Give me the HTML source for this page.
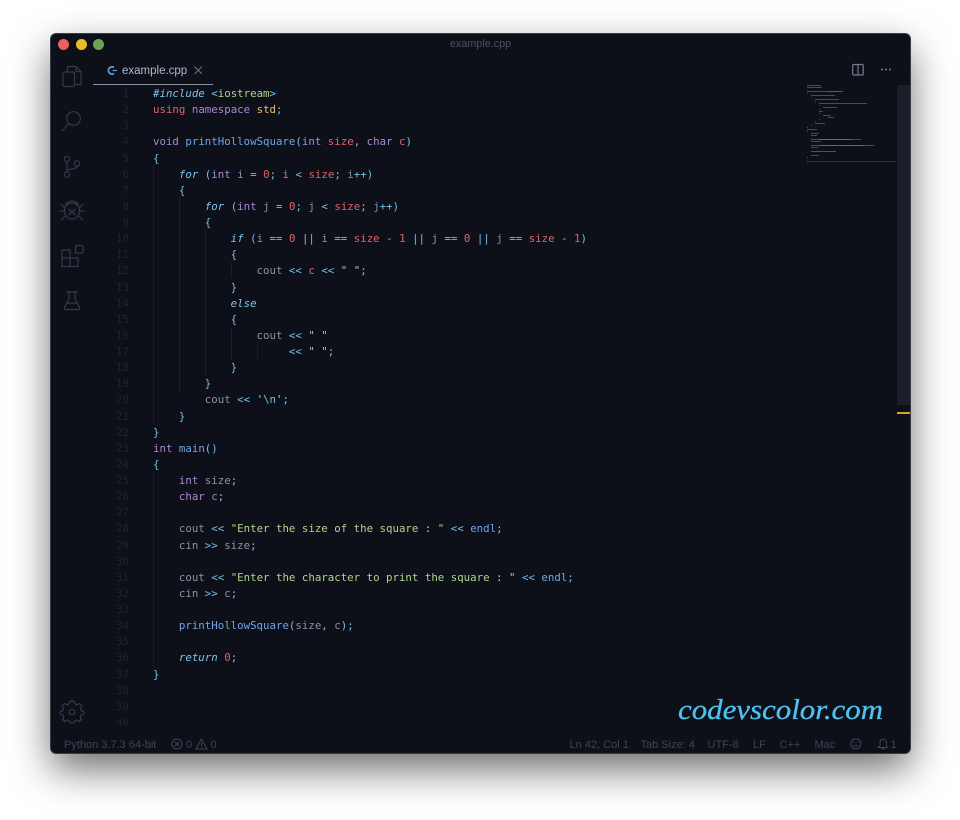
<!DOCTYPE html>
<html><head><meta charset="utf-8"><style>
html,body{margin:0;padding:0;background:#fff;width:960px;height:820px;overflow:hidden}
#win{position:absolute;left:51px;top:34px;width:859px;height:719px;background:#0d1019;border-radius:5px;box-shadow:0 0 0 1px #3a3d46,0 16px 40px rgba(0,0,0,.58)}
.d{position:absolute;top:38.500px;width:11px;height:11px;border-radius:50%}
.abs{position:absolute}
#code{position:absolute;left:153px;top:86px;font:10.75px/16.13px "DejaVu Sans Mono",monospace;color:#8c92a4;filter:blur(.25px)}
#code div{height:16.13px;white-space:pre}
#nums{position:absolute;left:100px;width:29px;top:86px;text-align:right;font:10.75px/16.13px "DejaVu Sans Mono",monospace;color:#1f2331}
#nums div{height:16.13px}
.k{color:#ab86d6}.r{color:#e0636b}.f{color:#6fa5ea}.c{color:#74bfe6}.g{color:#b0d68a}.i{color:#80c4ee;font-style:italic}.y{color:#e8c170}
.g1{position:absolute;width:1px;background:#1b1f2a}
.s{position:absolute;top:737.5px;font:11px/14px "Liberation Sans",sans-serif;color:#3e4454;white-space:pre}
</style></head><body>
<div id="win"></div>
<div class="d" style="left:58px;background:#ec5f5f"></div>
<div class="d" style="left:75.5px;background:#e8bd30"></div>
<div class="d" style="left:93px;background:#6fa253"></div>
<div class="abs" style="left:51px;width:859px;top:37px;text-align:center;font:10.800px/14px 'Liberation Sans',sans-serif;color:#4b5160">example.cpp</div>

<svg class="abs" style="left:51px;top:60px" width="44" height="670" fill="none" stroke="#333946" stroke-width="1.2">
<path d="M16.500 12V6.500H25L30 11.500V24.500H23.500"/><path d="M25 6.500V11.500H30"/><rect x="12" y="12" width="11.500" height="14.500" rx="1.500"/>
<circle cx="22.500" cy="58.500" r="6.800"/><path d="M17.500 63.500L11 71"/>
<circle cx="16" cy="99" r="2.700"/><circle cx="16" cy="114.500" r="2.700"/><circle cx="26" cy="103.500" r="2.700"/><path d="M16 102V111.700M16 110C21 109 25.500 109 26 106.200"/>
<path d="M14.500 145.500a7 7 0 0 1 13 0"/><ellipse cx="21" cy="151" rx="7.500" ry="8"/><path d="M17.500 149L24.500 155M24.500 149L17.500 155M13.500 147.500L9.500 144M28.500 147.500L32.500 144M13.500 151H9M28.500 151H33M14 156L10 160.500M28 156L32 160.500"/>
<path d="M11 190H19V198H27V206.500H11ZM11 198H27M19 198V206.500"/><rect x="24.500" y="185.500" width="7.500" height="7.500" rx="1"/>
<path d="M15.500 232H26.500M18 232V239L13.500 247.500Q13 249.500 15 249.500H27Q29 249.500 28.500 247.500L24 239V232M16 243H26"/>
<g transform="translate(21 652)"><circle r="2.700"/><path d="M-2 -10H2L2.800 -7.200L5 -6.200L7.700 -7.500L10 -5L8.500 -2.500L9.500 -.2L12 1V3L9.300 3.800L8.300 6L9.500 8.500L7 10.500L4.700 9L2.500 10L1.700 12H-1.700L-2.500 10L-4.700 9L-7 10.500L-9.500 8.500L-8.300 6L-9.300 3.800L-12 3V1L-9.500 -.2L-8.500 -2.500L-10 -5L-7.700 -7.500L-5 -6.200L-2.800 -7.200Z" transform="translate(0 -1)"/></g>
</svg>

<svg class="abs" style="left:106px;top:65px" width="14" height="12" fill="none" stroke="#5f9bd6" stroke-width="1.800"><path d="M8 2.500A3.600 3.600 0 1 0 8 8.500"/><path d="M6.500 5.500H11" stroke-width="1.200"/></svg>
<div class="abs" style="left:122px;top:63.500px;font:11.500px/15px 'Liberation Sans',sans-serif;color:#b3b9cb">example.cpp</div>
<svg class="abs" style="left:193px;top:65px" width="11" height="11" stroke="#6e7483" stroke-width="1" fill="none"><path d="M1.500 1.500L9 9M9 1.500L1.500 9"/></svg>
<div class="abs" style="left:93px;top:84px;width:120px;height:1px;background:#8b94a5"></div>

<svg class="abs" style="left:851px;top:63px" width="44" height="14" fill="none"><rect x="1.700" y="1.500" width="10.500" height="10.500" rx="1" stroke="#777d8c" stroke-width="1.200"/><path d="M7 1.500V12" stroke="#777d8c" stroke-width="1.200"/><circle cx="31" cy="6.500" r="1" fill="#777d8c"/><circle cx="35" cy="6.500" r="1" fill="#777d8c"/><circle cx="39" cy="6.500" r="1" fill="#777d8c"/></svg>

<svg class="abs" style="left:807px;top:85px" width="90" height="78" opacity=".75">
<g fill="#5a5f6e"><rect x="0" y="0" width="14" height="1"/><rect x="0" y="2" width="15" height="1"/><rect x="0" y="6" width="22" height="1"/><rect x="22" y="6" width="14" height="1" fill="#8a6a70"/><rect x="0" y="8" width="1" height="1"/><rect x="4" y="10" width="24" height="1"/><rect x="4" y="12" width="1" height="1"/><rect x="8" y="14" width="24" height="1"/><rect x="8" y="16" width="1" height="1"/><rect x="12" y="18" width="48" height="1"/><rect x="12" y="20" width="1" height="1"/><rect x="16" y="22" width="14" height="1"/><rect x="12" y="24" width="1" height="1"/><rect x="12" y="26" width="4" height="1"/><rect x="12" y="28" width="1" height="1"/><rect x="16" y="30" width="8" height="1"/><rect x="21" y="32" width="6" height="1"/><rect x="12" y="34" width="1" height="1"/><rect x="8" y="36" width="1" height="1"/><rect x="8" y="38" width="10" height="1"/><rect x="4" y="40" width="1" height="1"/><rect x="0" y="42" width="1" height="1"/><rect x="0" y="44" width="10" height="1"/><rect x="0" y="46" width="1" height="1"/><rect x="4" y="48" width="8" height="1"/><rect x="4" y="50" width="6" height="1"/><rect x="4" y="54" width="8" height="1"/><rect x="12" y="54" width="32" height="1" fill="#7d9160"/><rect x="44" y="54" width="10" height="1"/><rect x="4" y="56" width="10" height="1"/><rect x="4" y="60" width="8" height="1"/><rect x="12" y="60" width="46" height="1" fill="#7d9160"/><rect x="58" y="60" width="9" height="1"/><rect x="4" y="62" width="7" height="1"/><rect x="4" y="66" width="25" height="1" fill="#4e7095"/><rect x="4" y="70" width="8" height="1"/><rect x="0" y="72" width="1" height="1"/></g>
<path d="M0 76.500H90" stroke="#5a5f6e" stroke-width="1" stroke-dasharray="1.500 1"/>
</svg>
<div class="abs" style="left:897px;top:85px;width:13px;height:320px;background:#1b1e29"></div>
<div class="abs" style="left:897px;top:412px;width:13px;height:1.500px;background:#d0a524"></div>

<div class="g1" style="left:153px;top:165px;height:258px"></div>
<div class="g1" style="left:179px;top:198px;height:194px"></div>
<div class="g1" style="left:205px;top:230px;height:145px"></div>
<div class="g1" style="left:231px;top:262px;height:16px"></div>
<div class="g1" style="left:231px;top:327px;height:33px"></div>
<div class="g1" style="left:257px;top:343px;height:16px"></div>
<div class="g1" style="left:153px;top:472px;height:194px"></div>

<div id="nums"><div>1</div><div>2</div><div>3</div><div>4</div><div>5</div><div>6</div><div>7</div><div>8</div><div>9</div><div>10</div><div>11</div><div>12</div><div>13</div><div>14</div><div>15</div><div>16</div><div>17</div><div>18</div><div>19</div><div>20</div><div>21</div><div>22</div><div>23</div><div>24</div><div>25</div><div>26</div><div>27</div><div>28</div><div>29</div><div>30</div><div>31</div><div>32</div><div>33</div><div>34</div><div>35</div><div>36</div><div>37</div><div>38</div><div>39</div><div>40</div></div>

<div id="code"><div><span class="i">#include</span> <span class="c">&lt;</span><span class="g">iostream</span><span class="c">&gt;</span></div>
<div><span class="r">using</span> <span class="k">namespace</span> <span class="y">std</span><span class="c">;</span></div>
<div></div>
<div><span class="k">void</span> <span class="f">printHollowSquare</span><span class="c">(</span><span class="k">int</span> <span class="r">size</span><span class="c">,</span> <span class="k">char</span> <span class="r">c</span><span class="c">)</span></div>
<div><span class="c">{</span></div>
<div>    <span class="i">for</span> <span class="c">(</span><span class="k">int</span> i <span class="c">=</span> <span class="r">0</span><span class="c">;</span> i <span class="c">&lt;</span> <span class="r">size</span><span class="c">;</span> i<span class="c">++)</span></div>
<div>    <span class="c">{</span></div>
<div>        <span class="i">for</span> <span class="c">(</span><span class="k">int</span> j <span class="c">=</span> <span class="r">0</span><span class="c">;</span> j <span class="c">&lt;</span> <span class="r">size</span><span class="c">;</span> j<span class="c">++)</span></div>
<div>        <span class="c">{</span></div>
<div>            <span class="i">if</span> <span class="c">(</span>i <span class="c">==</span> <span class="r">0</span> <span class="c">||</span> i <span class="c">==</span> <span class="r">size</span> <span class="c">-</span> <span class="r">1</span> <span class="c">||</span> j <span class="c">==</span> <span class="r">0</span> <span class="c">||</span> j <span class="c">==</span> <span class="r">size</span> <span class="c">-</span> <span class="r">1</span><span class="c">)</span></div>
<div>            <span class="c">{</span></div>
<div>                cout <span class="c">&lt;&lt;</span> <span class="r">c</span> <span class="c">&lt;&lt;</span> <span class="g">" "</span><span class="c">;</span></div>
<div>            <span class="c">}</span></div>
<div>            <span class="i">else</span></div>
<div>            <span class="c">{</span></div>
<div>                cout <span class="c">&lt;&lt;</span> <span class="g">" "</span></div>
<div>                     <span class="c">&lt;&lt;</span> <span class="g">" "</span><span class="c">;</span></div>
<div>            <span class="c">}</span></div>
<div>        <span class="c">}</span></div>
<div>        cout <span class="c">&lt;&lt;</span> <span class="g">'</span><span class="c">\n</span><span class="g">'</span><span class="c">;</span></div>
<div>    <span class="c">}</span></div>
<div><span class="c">}</span></div>
<div><span class="k">int</span> <span class="f">main</span><span class="c">()</span></div>
<div><span class="c">{</span></div>
<div>    <span class="k">int</span> size<span class="c">;</span></div>
<div>    <span class="k">char</span> c<span class="c">;</span></div>
<div></div>
<div>    cout <span class="c">&lt;&lt;</span> <span class="g">"Enter the size of the square : "</span> <span class="c">&lt;&lt;</span> <span class="f">endl</span><span class="c">;</span></div>
<div>    cin <span class="c">&gt;&gt;</span> size<span class="c">;</span></div>
<div></div>
<div>    cout <span class="c">&lt;&lt;</span> <span class="g">"Enter the character to print the square : "</span> <span class="c">&lt;&lt;</span> <span class="f">endl</span><span class="c">;</span></div>
<div>    cin <span class="c">&gt;&gt;</span> c<span class="c">;</span></div>
<div></div>
<div>    <span class="f">printHollowSquare</span><span class="c">(</span>size<span class="c">,</span> c<span class="c">);</span></div>
<div></div>
<div>    <span class="i">return</span> <span class="r">0</span><span class="c">;</span></div>
<div><span class="c">}</span></div></div>

<svg class="abs" style="left:670px;top:692px" width="220" height="36"><text x="8" y="27" textLength="205" lengthAdjust="spacingAndGlyphs" font-family="Liberation Serif, serif" font-style="italic" font-size="29" fill="#4cc3f0" stroke="#4cc3f0" stroke-width=".3">codevscolor.com</text></svg>

<div class="s" style="left:64px">Python 3.7.3 64-bit</div>
<svg class="abs" style="left:170px;top:737px" width="44" height="14" fill="none" stroke="#3e4454" stroke-width="1"><circle cx="7" cy="7" r="5"/><path d="M5 5L9 9M9 5L5 9"/><path d="M31.500 2L37 12H26Z"/><path d="M31.500 5.500V9M31.500 10V11"/></svg>
<div class="s" style="left:186px">0</div>
<div class="s" style="left:210.500px">0</div>
<div class="s" style="left:569.500px">Ln 42, Col 1</div>
<div class="s" style="left:640.500px">Tab Size: 4</div>
<div class="s" style="left:707.500px">UTF-8</div>
<div class="s" style="left:753px">LF</div>
<div class="s" style="left:779.500px">C++</div>
<div class="s" style="left:814.500px">Mac</div>
<svg class="abs" style="left:849px;top:737px" width="46" height="14" fill="none" stroke="#3e4454" stroke-width="1"><circle cx="6.800" cy="6.800" r="5"/><path d="M4.500 8Q6.800 10.500 9 8M4.700 5.300H5.500M8.200 5.300H9"/><path d="M29 10.500H38.500L37.500 9V5.500A3.200 3.200 0 0 0 31 5.500V9ZM32.500 10.500A1.500 1.500 0 0 0 35.500 10.500"/></svg>
<div class="s" style="left:890.500px">1</div>
</body></html>
